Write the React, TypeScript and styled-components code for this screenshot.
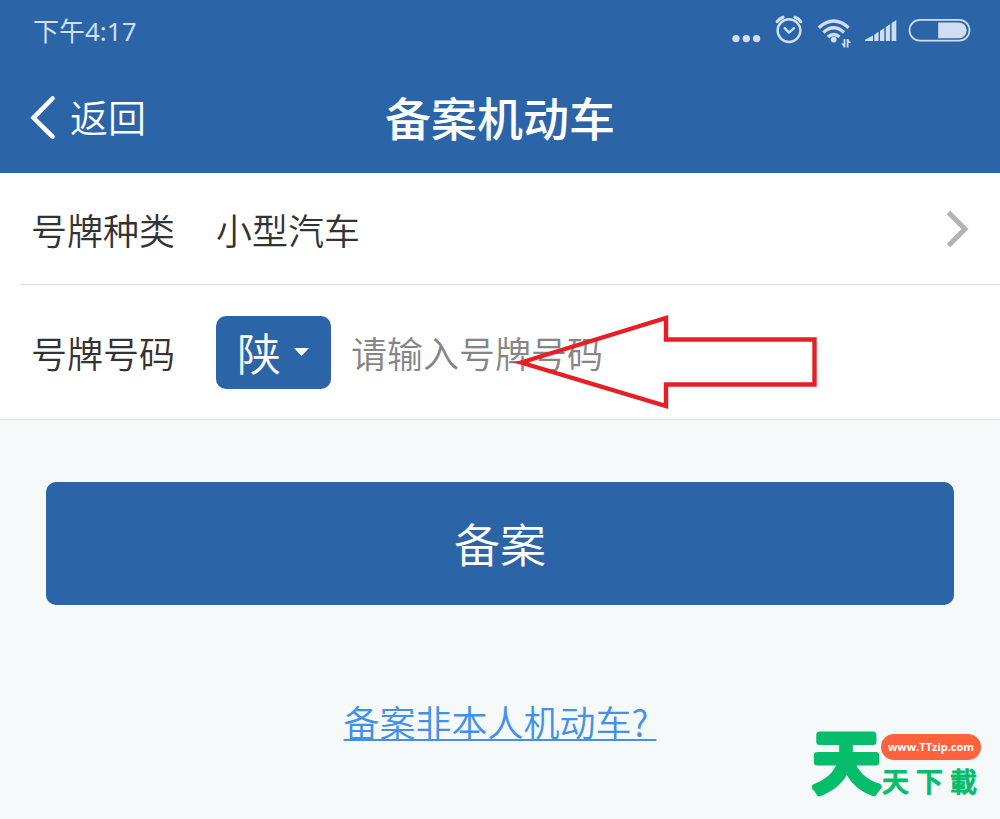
import React, { useState } from "react";
import styled, { createGlobalStyle } from "styled-components";

const blue = "#2b65a8";
const statusInk = "#cfdef2";
const markGreen = "#06bd6c";

const GlobalStyle = createGlobalStyle`
  *, *::before, *::after { box-sizing: border-box; }
  body {
    margin: 0;
    background: #f5f9fa;
    color: #333;
    font-family: "Noto Sans CJK SC", "Noto Sans", sans-serif;
    font-weight: 350;
  }
  button, input, select { font: inherit; color: inherit; }
`;

const Page = styled.div`
  position: relative;
  min-height: 100vh;
  display: flex;
  flex-direction: column;
`;

const StatusBar = styled.div`
  display: flex;
  align-items: center;
  justify-content: space-between;
  height: 62px;
  padding: 0 28px 0 33px;
  background: ${blue};
  color: ${statusInk};
  font-family: "Noto Sans", "Noto Sans CJK SC", sans-serif;
  font-weight: 400;
  font-size: 26px;
  line-height: 36px;
`;

const StatusIcons = styled.svg`
  display: block;
  width: 240px;
  height: 40px;
`;

const NavBar = styled.header`
  display: grid;
  grid-template-columns: 1fr auto 1fr;
  align-items: center;
  height: 111px;
  padding: 0 28px 4px;
  background: ${blue};
  color: #fff;
`;

const BackButton = styled.button`
  justify-self: start;
  display: flex;
  align-items: center;
  gap: 12px;
  padding: 0;
  border: 0;
  background: none;
  color: #fff;
  font-size: 38px;
  line-height: 52px;
  cursor: pointer;
`;

const Title = styled.h1`
  margin: 0;
  font-size: 46px;
  line-height: 56px;
  font-weight: 500;
`;

const Form = styled.form`
  display: flex;
  flex-direction: column;
`;

const Fields = styled.div`
  background: #fff;
  border-bottom: 1px solid #e2e4e5;
`;

const fieldRow = `
  display: flex;
  align-items: center;
  font-size: 36px;
  line-height: 52px;
`;

const TypeRow = styled.button`
  ${fieldRow}
  width: calc(100% - 20px);
  height: 112px;
  margin-left: 20px;
  padding: 0 31px 0 11px;
  border: 0;
  border-bottom: 1px solid #e2e4e5;
  background: none;
  text-align: left;
  cursor: pointer;
`;

const NumberRow = styled.div`
  ${fieldRow}
  position: relative;
  height: 134px;
  padding: 0 31px;
`;

const FieldName = styled.span`
  flex: none;
  width: 185px;
`;

const FieldValue = styled.span`
  flex: 1;
`;

const ProvinceBox = styled.div`
  position: relative;
  flex: none;
  width: 115px;
  height: 73px;
`;

const ProvinceSelect = styled.select`
  width: 100%;
  height: 100%;
  padding: 0 0 0 21px;
  border: 0;
  border-radius: 10px;
  background: ${blue};
  color: #fff;
  font-size: 44px;
  line-height: 64px;
  appearance: none;
`;

const Caret = styled.svg`
  position: absolute;
  right: 22px;
  top: 32px;
  pointer-events: none;
`;

const PlateInput = styled.input`
  flex: 1;
  min-width: 0;
  margin-left: 20px;
  padding: 0;
  border: 0;
  outline: 0;
  background: none;
  line-height: 52px;
  &::placeholder { color: #858585; opacity: 1; }
`;

const Arrow = styled.svg`
  position: absolute;
  left: 510px;
  top: 26px;
  pointer-events: none;
`;

const SubmitButton = styled.button`
  height: 123px;
  margin: 62px 46px 0;
  padding: 0 0 4px;
  border: 0;
  border-radius: 10px;
  background: ${blue};
  color: #fff;
  font-size: 46px;
  line-height: 64px;
  cursor: pointer;
`;

const OtherLink = styled.a`
  align-self: center;
  margin-top: 90px;
  color: #4290e8;
  font-size: 36px;
  line-height: 52px;
  white-space: pre;
  text-decoration: underline;
  text-decoration-thickness: 2px;
  text-underline-offset: 2px;
  text-decoration-skip-ink: none;
`;

const Watermark = styled.svg`
  position: absolute;
  right: 18px;
  bottom: 8px;
  font-weight: 500;
`;

const MarkText = styled.text<{ $size: number; $stroke: number }>`
  fill: ${markGreen};
  stroke: ${markGreen};
  stroke-width: ${(p) => p.$stroke}px;
  stroke-linejoin: round;
  font-size: ${(p) => p.$size}px;
`;

const MarkSite = styled.text`
  fill: #fff;
  font-family: "Open Sans", sans-serif;
  font-size: 11px;
  font-weight: 700;
  text-anchor: middle;
`;

function StatusGlyphs() {
  return (
    <StatusIcons viewBox="0 0 240 40" aria-hidden="true" fill="none" stroke={statusInk}>
      <g fill={statusInk} stroke="none">
        <circle cx="4" cy="27.6" r="3.7" />
        <circle cx="14.3" cy="27.6" r="3.7" />
        <circle cx="24.6" cy="27.6" r="3.7" />
      </g>
      <g strokeWidth="2.4" strokeLinecap="round" strokeLinejoin="round">
        <circle cx="57" cy="19.6" r="11.4" />
        <path d="M52.7 17.2l4.3 4.4 5-4.4" />
        <path d="M45.2 10.6q2.1-3.2 5.8-4.4M68.8 10.6q-2.1-3.2-5.8-4.4" strokeWidth="3.2" />
      </g>
      <g strokeWidth="3.4">
        <path d="M86.7 16.7q15-13.4 30 0" />
        <path d="M91.4 21.5q10.3-9.4 20.6 0" />
        <path d="M95.9 26q5.8-5 11.6 0" />
      </g>
      <circle cx="101.7" cy="28.6" r="2.9" fill={statusInk} stroke="none" />
      <path d="M112.5 28v8.5M115.6 28v8.500" strokeWidth="1.8" />
      <path d="M112.5 36.5l-3.500-4h3.500zM115.600 28l3.500 4h-3.500z" fill={statusInk} stroke="none" />
      <g fill={statusInk} stroke="none">
        <path d="M133 30v-1.200l8-4.300v5.500zM142.300 30v-6.300l4.300-2.900v9.200zM148 30v-10.100l4.300-2.900v13zM153.800 30v-13.900l4.300-2.900v16.800zM159.600 30v-17.700l4.700-3.300v21z" />
        <path d="M206.200 11.400h20.600a7.900 7.900 0 0 1 0 15.800h-20.600z" />
      </g>
      <rect x="177.5" y="8.8" width="60" height="20.8" rx="10.4" strokeWidth="1.7" />
    </StatusIcons>
  );
}

export default function App() {
  const [province, setProvince] = useState("陕");
  const [plate, setPlate] = useState("");

  return (
    <Page>
      <GlobalStyle />
      <StatusBar>
        <span>下午4:17</span>
        <StatusGlyphs />
      </StatusBar>
      <NavBar>
        <BackButton type="button">
          <svg width="30" height="48" viewBox="0 0 30 48" fill="none" stroke="#fff" strokeWidth="4.6" strokeLinecap="round" aria-hidden="true">
            <path d="M24.5 6.500L5.500 25.800l19 18.900" />
          </svg>
          返回
        </BackButton>
        <Title>备案机动车</Title>
      </NavBar>
      <Form onSubmit={(e) => e.preventDefault()}>
        <Fields>
          <TypeRow type="button">
            <FieldName>号牌种类</FieldName>
            <FieldValue>小型汽车</FieldValue>
            <svg width="24" height="40" viewBox="0 0 24 40" fill="none" stroke="#b3b3b3" strokeWidth="5" aria-hidden="true">
              <path d="M3.5 3.5L20 20 3.5 36.5" />
            </svg>
          </TypeRow>
          <NumberRow>
            <FieldName as="label" htmlFor="plate">号牌号码</FieldName>
            <ProvinceBox>
              <ProvinceSelect aria-label="省份" value={province} onChange={(e) => setProvince(e.target.value)}>
                <option>陕</option>
              </ProvinceSelect>
              <Caret width="15" height="8" viewBox="0 0 15 8" aria-hidden="true">
                <path d="M0 0h15L7.5 8z" fill="#fff" />
              </Caret>
            </ProvinceBox>
            <PlateInput id="plate" placeholder="请输入号牌号码" value={plate} onChange={(e) => setPlate(e.target.value)} />
            <Arrow width="312" height="104" viewBox="0 0 312 104" fill="none" stroke="#e61e25" strokeWidth="4.4" aria-hidden="true">
              <path d="M11 51.5L156 7v21.500h148.500v45H156v21.500z" />
            </Arrow>
          </NumberRow>
        </Fields>
        <SubmitButton type="submit">备案</SubmitButton>
        <OtherLink href="#other">{"备案非本人机动车? "}</OtherLink>
      </Form>
      <Watermark width="170" height="104" viewBox="0 -20 170 104">
        <MarkText $size={67} $stroke={7} x="1" y="60">天</MarkText>
        <rect x="69" y="7" width="100" height="26" rx="13" fill="#ff623d" />
        <MarkSite x="119" y="24">www.TTzip.com</MarkSite>
        <MarkText $size={27} $stroke={1} x="70 104 138" y="65">天下載</MarkText>
      </Watermark>
    </Page>
  );
}
